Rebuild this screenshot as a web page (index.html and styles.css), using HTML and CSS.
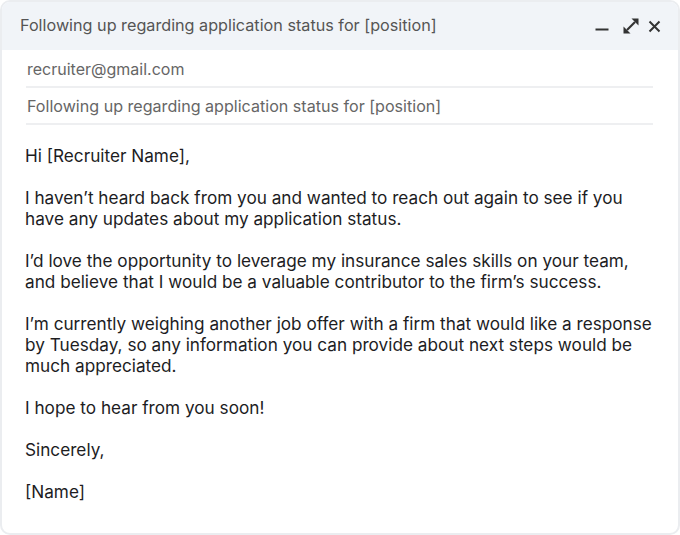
FILE: index.html
```html
<!DOCTYPE html>
<html>
<head>
<meta charset="utf-8">
<link rel="stylesheet" href="styles.css">
</head>
<body>
<div class="card">
  <div class="header">
    <span class="title">Following up regarding application status for [position]</span>
    <div class="actions">
      <svg class="ic-min" width="14" height="16" viewBox="0 0 14 16"><path d="M0.5 11.5h13" stroke="#333" stroke-width="2"/></svg>
      <svg class="ic-exp" width="16" height="16" viewBox="0 0 16 16"><path d="M12 4L4 12" stroke="#333" stroke-width="2.2"/><path d="M15.5 0.5V7.5L8.5 0.5Z" fill="#333"/><path d="M0.5 15.5V8.5L7.5 15.5Z" fill="#333"/></svg>
      <svg class="ic-close" width="13" height="13" viewBox="0 0 13 13"><path d="M1.5 1.5l10 10M11.5 1.5l-10 10" stroke="#333" stroke-width="2"/></svg>
    </div>
  </div>
  <div class="fields">
    <div class="field">recruiter@gmail.com</div>
    <div class="field second">Following up regarding application status for [position]</div>
  </div>
  <div class="body">
    <p>Hi [Recruiter Name],</p>
    <p>I haven’t heard back from you and wanted to reach out again to see if you have any updates about my application status.</p>
    <p>I’d love the opportunity to leverage my insurance sales skills on your team, and believe that I would be a valuable contributor to the firm’s success.</p>
    <p>I’m currently weighing another job offer with a firm that would like a response by Tuesday, so any information you can provide about next steps would be much appreciated.</p>
    <p>I hope to hear from you soon!</p>
    <p>Sincerely,</p>
    <p>[Name]</p>
  </div>
</div>
</body>
</html>
```
FILE: styles.css
```css
html, body { margin: 0; padding: 0; background: #fff; }
body { font-family: Inter, "Noto Sans", sans-serif; width: 680px; height: 535px; }
.card {
  box-sizing: border-box;
  width: 680px;
  height: 535px;
  border: 2px solid #ebedf0;
  border-radius: 10px;
  overflow: hidden;
  background: #fff;
}
.header {
  height: 48px;
  background: #f1f4f8;
  display: flex;
  align-items: center;
  justify-content: space-between;
  padding: 0 17px 0 18px;
}
.title { font-size: 16.2px; color: #555; margin-top: -2px; }
.actions { display: flex; align-items: center; }
.actions svg { display: block; }
.ic-min { margin-right: 14px; }
.ic-exp { margin-right: 9px; }
.ic-close { margin-top: 1px; }
.fields { padding: 0 25px 0 24px; }
.field {
  font-size: 16px;
  color: #666;
  height: 36px;
  line-height: 38px;
  border-bottom: 2px solid #eeeff1;
  padding-left: 1px;
}
.field.second { height: 35px; line-height: 36px; font-size: 16.1px; }
.body { padding: 20px 23px 0 23px; color: #1d1d1f; font-size: 17.2px; line-height: 21px; }
.body p { margin: 0 0 21px 0; }
```
